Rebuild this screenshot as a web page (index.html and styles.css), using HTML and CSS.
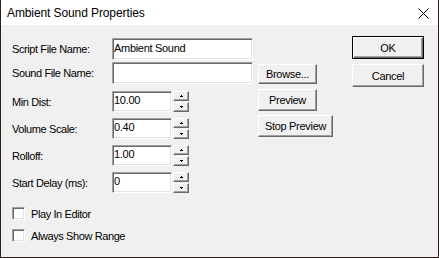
FILE: index.html
```html
<!DOCTYPE html>
<html lang="en">
<head>
    <meta charset="UTF-8">
    <title>Ambient Sound Properties</title>
    <link rel="stylesheet" href="styles.css">
</head>
<body>

<div class="window">
    <div class="titlebar">
        <span class="title">Ambient Sound Properties</span>
        <svg class="close" width="11" height="11" viewBox="0 0 11 11">
            <path d="M0.5 0.5L10.5 10.5M10.5 0.5L0.5 10.5" stroke="#000" stroke-width="1"/>
        </svg>
    </div>

    <div class="content">
        <div class="fields">
            <div class="row">
                <label for="script">Script File Name:</label>
                <input class="edit wide" type="text" id="script" value="Ambient Sound">
            </div>
            <div class="row row-file">
                <label for="sound">Sound File Name:</label>
                <input class="edit wide" type="text" id="sound" value="">
            </div>

            <div class="row spin-row first-spin">
                <label for="mindist">Min Dist:</label>
                <input class="edit short" type="text" id="mindist" value="10.00">
                <div class="spinner"><span class="spin-btn up"></span><span class="spin-btn down"></span></div>
            </div>
            <div class="row spin-row">
                <label for="volume">Volume Scale:</label>
                <input class="edit short" type="text" id="volume" value="0.40">
                <div class="spinner"><span class="spin-btn up"></span><span class="spin-btn down"></span></div>
            </div>
            <div class="row spin-row">
                <label for="rolloff">Rolloff:</label>
                <input class="edit short" type="text" id="rolloff" value="1.00">
                <div class="spinner"><span class="spin-btn up"></span><span class="spin-btn down"></span></div>
            </div>
            <div class="row spin-row">
                <label for="delay">Start Delay (ms):</label>
                <input class="edit short" type="text" id="delay" value="0">
                <div class="spinner"><span class="spin-btn up"></span><span class="spin-btn down"></span></div>
            </div>

            <label class="check-row first-check"><input type="checkbox" class="check">Play In Editor</label>
            <label class="check-row"><input type="checkbox" class="check">Always Show Range</label>
        </div>

        <div class="side">
            <button class="btn browse">Browse...</button>
            <button class="btn preview">Preview</button>
            <button class="btn stop">Stop Preview</button>
        </div>

        <div class="dialog-buttons">
            <button class="btn default">OK</button>
            <button class="btn cancel">Cancel</button>
        </div>
    </div>
</div>

</body>
</html>
```

FILE: styles.css
```css
body {
    margin: 0;
    font-family: "Liberation Sans", Arial, sans-serif;
    font-size: 11px;
    color: #000;
}

.window {
    width: 439px;
    height: 258px;
    box-sizing: border-box;
    border: 1px solid #2e1e1e;
    border-top: none;
    background-color: #f0f0f0;
}

.titlebar {
    height: 25px;
    background-color: #fff;
    display: flex;
    align-items: center;
    padding: 0 9px 0 6px;
}
.title { flex: 1; font-size: 12px; letter-spacing: -0.1px; }
.close { display: block; margin-top: 1px; }

.content { display: flex; align-items: flex-start; }

/* left column: labels + edits */
.fields { width: 241px; padding: 13px 0 0 11px; }
.row { display: flex; align-items: center; height: 22px; }
.row label { width: 100px; letter-spacing: -0.4px; }
.row-file { margin-top: 2px; }
.spin-row { height: 21px; margin-top: 6px; }
.first-spin { margin-top: 7px; }

.edit {
    box-sizing: border-box;
    height: 22px;
    margin: 0;
    padding: 0 0 3px 1px;
    font-family: inherit;
    font-size: 11px;
    letter-spacing: -0.3px;
    color: #000;
    background-color: #fff;
    border: 1px solid;
    border-color: #a0a0a0 #fff #fff #a0a0a0;
    box-shadow: inset 1px 1px #696969, inset -1px -1px #e3e3e3;
    outline: none;
}
.wide { width: 141px; }
.short { width: 60px; height: 21px; }

.spinner {
    display: flex;
    flex-direction: column;
    gap: 1px;
    margin-left: 1px;
}
.spin-btn {
    box-sizing: border-box;
    width: 16px;
    height: 10px;
    display: flex;
    align-items: center;
    justify-content: center;
    background-color: #f0f0f0;
    border: 1px solid;
    border-color: #fff #696969 #696969 #fff;
    box-shadow: inset -1px -1px #a0a0a0;
}
/* tiny 3x2 arrow drawn from single pixels */
.spin-btn::after {
    content: "";
    width: 1px;
    height: 1px;
    background-color: #000;
}
.up::after { margin-top: -1px; box-shadow: -1px 1px #000, 0 1px #000, 1px 1px #000; }
.down::after { margin-top: 1px; box-shadow: -1px -1px #000, 0 -1px #000, 1px -1px #000; }

.check-row {
    display: flex;
    align-items: center;
    gap: 6px;
    height: 13px;
    margin-top: 9px;
    letter-spacing: -0.4px;
}
.first-check { margin-top: 14px; }
.check {
    appearance: none;
    -webkit-appearance: none;
    box-sizing: border-box;
    width: 13px;
    height: 13px;
    margin: 0;
    background-color: #fff;
    border: 1px solid;
    border-color: #a0a0a0 #fff #fff #a0a0a0;
    box-shadow: inset 1px 1px #696969, inset -1px -1px #e3e3e3;
}

/* buttons */
.btn {
    box-sizing: border-box;
    display: block;
    margin: 0;
    padding: 0;
    font-family: inherit;
    font-size: 11px;
    letter-spacing: -0.3px;
    color: #000;
    background-color: #f0f0f0;
    border: 1px solid;
    border-color: #fff #696969 #696969 #fff;
    box-shadow: inset -1px -1px #a0a0a0;
}
.side { width: 75px; margin-left: 5px; padding-top: 39px; }
.browse { width: 59px; height: 20px; }
.preview { width: 59px; height: 22px; margin-top: 5px; }
.stop { width: 75px; height: 22px; margin-top: 4px; }

.dialog-buttons { margin-left: 19px; padding-top: 11px; }
.dialog-buttons .btn { width: 72px; height: 23px; }
.cancel { margin-top: 5px; }
.default {
    border: 1px solid #000;
    box-shadow: inset 1px 1px #fff, inset -1px -1px #696969, inset -2px -2px #a0a0a0;
}
```
